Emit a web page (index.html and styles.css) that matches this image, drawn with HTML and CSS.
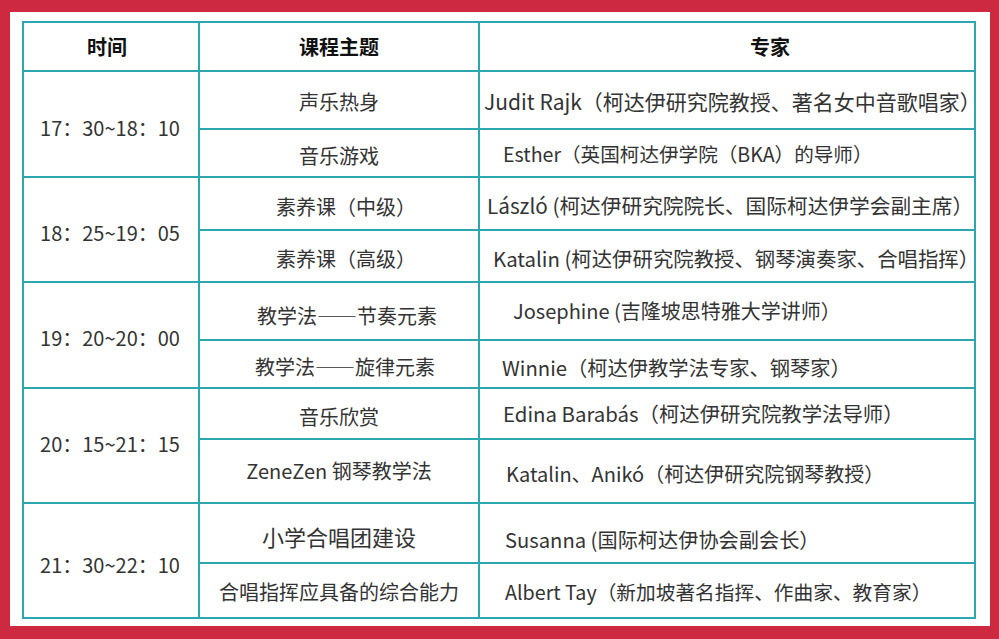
FILE: index.html
```html
<!DOCTYPE html>
<html lang="zh-CN">
<head>
<meta charset="utf-8">
<title>课程安排</title>
<link rel="stylesheet" href="styles.css">
</head>
<body>
<div class="frame">
  <div class="schedule">
    <div class="cell head head-time">时间</div>
    <div class="cell head">课程主题</div>
    <div class="cell head head-expert">专家</div>

    <div class="cell time t1">17：30~18：10</div>
    <div class="cell topic r1">声乐热身</div>
    <div class="cell expert e1 in-4">Judit Rajk（柯达伊研究院教授、著名女中音歌唱家）</div>
    <div class="cell topic r2">音乐游戏</div>
    <div class="cell expert e2 in-24">Esther（英国柯达伊学院（BKA）的导师）</div>

    <div class="cell time t2">18：25~19：05</div>
    <div class="cell topic r3 shift-7">素养课（中级）</div>
    <div class="cell expert e3 in-8">László (柯达伊研究院院长、国际柯达伊学会副主席）</div>
    <div class="cell topic r4 shift-7">素养课（高级）</div>
    <div class="cell expert e4 in-14">Katalin (柯达伊研究院教授、钢琴演奏家、合唱指挥）</div>

    <div class="cell time t3">19：20~20：00</div>
    <div class="cell topic r5 shift-8">教学法——节奏元素</div>
    <div class="cell expert e5 in-34">Josephine (吉隆坡思特雅大学讲师）</div>
    <div class="cell topic r6 shift-6">教学法——旋律元素</div>
    <div class="cell expert e6 in-23">Winnie（柯达伊教学法专家、钢琴家）</div>

    <div class="cell time t4">20：15~21：15</div>
    <div class="cell topic r7">音乐欣赏</div>
    <div class="cell expert e7 in-24">Edina Barabás（柯达伊研究院教学法导师）</div>
    <div class="cell topic r8">ZeneZen 钢琴教学法</div>
    <div class="cell expert e8 in-27">Katalin、Anikó（柯达伊研究院钢琴教授）</div>

    <div class="cell time t5">21：30~22：10</div>
    <div class="cell topic r9 big">小学合唱团建设</div>
    <div class="cell expert e9 in-26">Susanna (国际柯达伊协会副会长）</div>
    <div class="cell topic r10">合唱指挥应具备的综合能力</div>
    <div class="cell expert e10 in-26">Albert Tay（新加坡著名指挥、作曲家、教育家）</div>
  </div>
</div>
</body>
</html>
```

FILE: styles.css
```css
html, body {
  margin: 0;
  padding: 0;
}
body {
  background: #cd2a41;
  width: 999px;
  height: 639px;
  overflow: hidden;
  font-family: "Noto Sans CJK SC", "Noto Sans", sans-serif;
}
.frame {
  margin: 12px 9px 13px 10px;
  height: 614px;
  box-sizing: border-box;
  background: #ffffff;
  padding: 9px 14px 7px 12px;
}
.schedule {
  display: grid;
  grid-template-columns: 174px 278px 494px;
  grid-template-rows: 47px 56px 46px 51px 50px 56px 46px 49px 62px 58px 53px;
  gap: 2px;
  padding: 2px;
  width: 954px;
  box-sizing: border-box;
  background: #2ca7b0;
}
.cell {
  background: #ffffff;
  display: flex;
  align-items: center;
  justify-content: center;
  font-size: 20px;
  line-height: 1.2;
  color: #333333;
  white-space: nowrap;
  box-sizing: border-box;
  padding-top: 6px;
}
.head {
  font-weight: bold;
  color: #111111;
  padding-top: 0;
}
.head-time {
  padding-right: 8px;
}
.head-expert {
  padding-left: 86px;
}
.time {
  grid-row: span 2;
  padding-top: 7px;
  padding-right: 2px;
}
.t3 { padding-top: 5px; }
.t4 { padding-top: 0; padding-bottom: 4px; }
.t5 { padding-top: 8px; }

.expert {
  justify-content: flex-start;
}

.r1 { padding-top: 4px; }
.r2 { padding-top: 6px; }
.r5 { padding-top: 10px; }
.r7 { padding-top: 6px; }
.r8 { padding-top: 0; }
.r9 { padding-top: 6px; }
.r10 { padding-top: 2px; }

.e1 { padding-top: 4px; font-size: 21px; }
.e2 { padding-top: 2px; font-size: 19.6px; }
.e3 { padding-top: 4px; font-size: 20.7px; }
.e4 { padding-top: 4px; font-size: 20.4px; }
.e5 { padding-top: 0; }
.e6 { padding-top: 6px; font-size: 20.3px; }
.e7 { padding-top: 0; font-size: 20.4px; }
.e8 { padding-top: 6px; }
.e9 { padding-top: 14px; font-size: 20.2px; }
.e10 { padding-top: 2px; font-size: 19.7px; }

.shift-6 { padding-left: 12px; }
.shift-7 { padding-left: 14px; }
.shift-8 { padding-left: 16px; }
.big {
  font-size: 22px;
}
.in-4 { padding-left: 4px; }
.in-8 { padding-left: 7px; }
.in-14 { padding-left: 13px; }
.in-23 { padding-left: 22px; }
.in-24 { padding-left: 23px; }
.in-26 { padding-left: 25px; }
.in-27 { padding-left: 26px; }
.in-34 { padding-left: 33px; }
```
